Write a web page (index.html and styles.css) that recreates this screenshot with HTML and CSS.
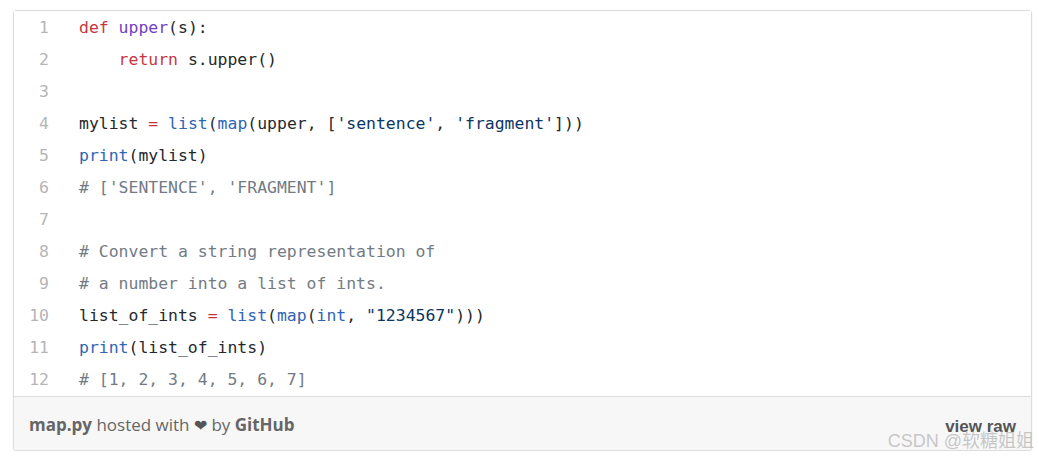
FILE: index.html
```html
<!DOCTYPE html>
<html>
<head>
<meta charset="utf-8">
<link rel="stylesheet" href="styles.css">
</head>
<body>
<div class="gist">
  <div class="code">
    <div class="ln">1</div><div class="lc"><span class="k">def</span> <span class="f">upper</span>(s):</div>
    <div class="ln">2</div><div class="lc">    <span class="k">return</span> s.upper()</div>
    <div class="ln">3</div><div class="lc"></div>
    <div class="ln">4</div><div class="lc">mylist <span class="k">=</span> <span class="b">list</span>(<span class="b">map</span>(upper, [<span class="s">'sentence'</span>, <span class="s">'fragment'</span>]))</div>
    <div class="ln">5</div><div class="lc"><span class="b">print</span>(mylist)</div>
    <div class="ln">6</div><div class="lc"><span class="c"># ['SENTENCE', 'FRAGMENT']</span></div>
    <div class="ln">7</div><div class="lc"></div>
    <div class="ln">8</div><div class="lc"><span class="c"># Convert a string representation of</span></div>
    <div class="ln">9</div><div class="lc"><span class="c"># a number into a list of ints.</span></div>
    <div class="ln">10</div><div class="lc">list_of_ints <span class="k">=</span> <span class="b">list</span>(<span class="b">map</span>(<span class="b">int</span>, <span class="s">"1234567"</span>)))</div>
    <div class="ln">11</div><div class="lc"><span class="b">print</span>(list_of_ints)</div>
    <div class="ln">12</div><div class="lc"><span class="c"># [1, 2, 3, 4, 5, 6, 7]</span></div>
  </div>
  <div class="meta">
    <div><strong>map.py</strong> hosted with <span class="heart">&#10084;</span> by <strong>GitHub</strong></div>
    <div class="raw">view raw</div>
  </div>
  <div class="wm">CSDN @软糖姐姐</div>
</div>
</body>
</html>
```

FILE: styles.css
```css
html, body {
  margin: 0;
  padding: 0;
  background: #fff;
}
body {
  padding: 10px 7px 0 13px;
}
.gist {
  position: relative;
  border: 1px solid #ddd;
  border-radius: 3px;
  box-shadow: 0 1px 2px rgba(0,0,0,0.08);
}
.code {
  display: grid;
  grid-template-columns: 35px 1fr;
  padding-top: 1px;
  background: #fff;
  font-family: "DejaVu Sans Mono", "Liberation Mono", monospace;
  font-size: 16.45px;
  line-height: 32px;
  color: #24292e;
}
.ln {
  text-align: right;
  color: #b5b5b5;
  height: 32px;
}
.lc {
  padding-left: 30px;
  white-space: pre;
  height: 32px;
}
.k { color: #c5363f; }
.f { color: #6f42c1; }
.b { color: #2f65b4; }
.s { color: #0b3563; }
.c { color: #737b84; }
.meta {
  display: flex;
  justify-content: space-between;
  align-items: flex-end;
  height: 54px;
  box-sizing: border-box;
  padding: 0 15px 15px 15px;
  background: #f7f7f7;
  border-top: 1px solid #ddd;
  border-radius: 0 0 3px 3px;
  font-family: "Open Sans", "Liberation Sans", sans-serif;
  font-size: 17px;
  color: #666;
  line-height: 20px;
}
.meta strong {
  font-weight: 700;
}
.heart {
  font-size: 16px;
  color: #555;
}
.raw {
  font-family: "Liberation Sans", Arial, sans-serif;
  font-weight: 700;
  color: #555;
  margin-bottom: -2px;
}
.wm {
  position: absolute;
  right: -3px;
  bottom: -2px;
  font-family: "Liberation Sans", "Noto Sans CJK SC", sans-serif;
  font-size: 18px;
  color: rgba(190,190,190,0.85);
}
```
